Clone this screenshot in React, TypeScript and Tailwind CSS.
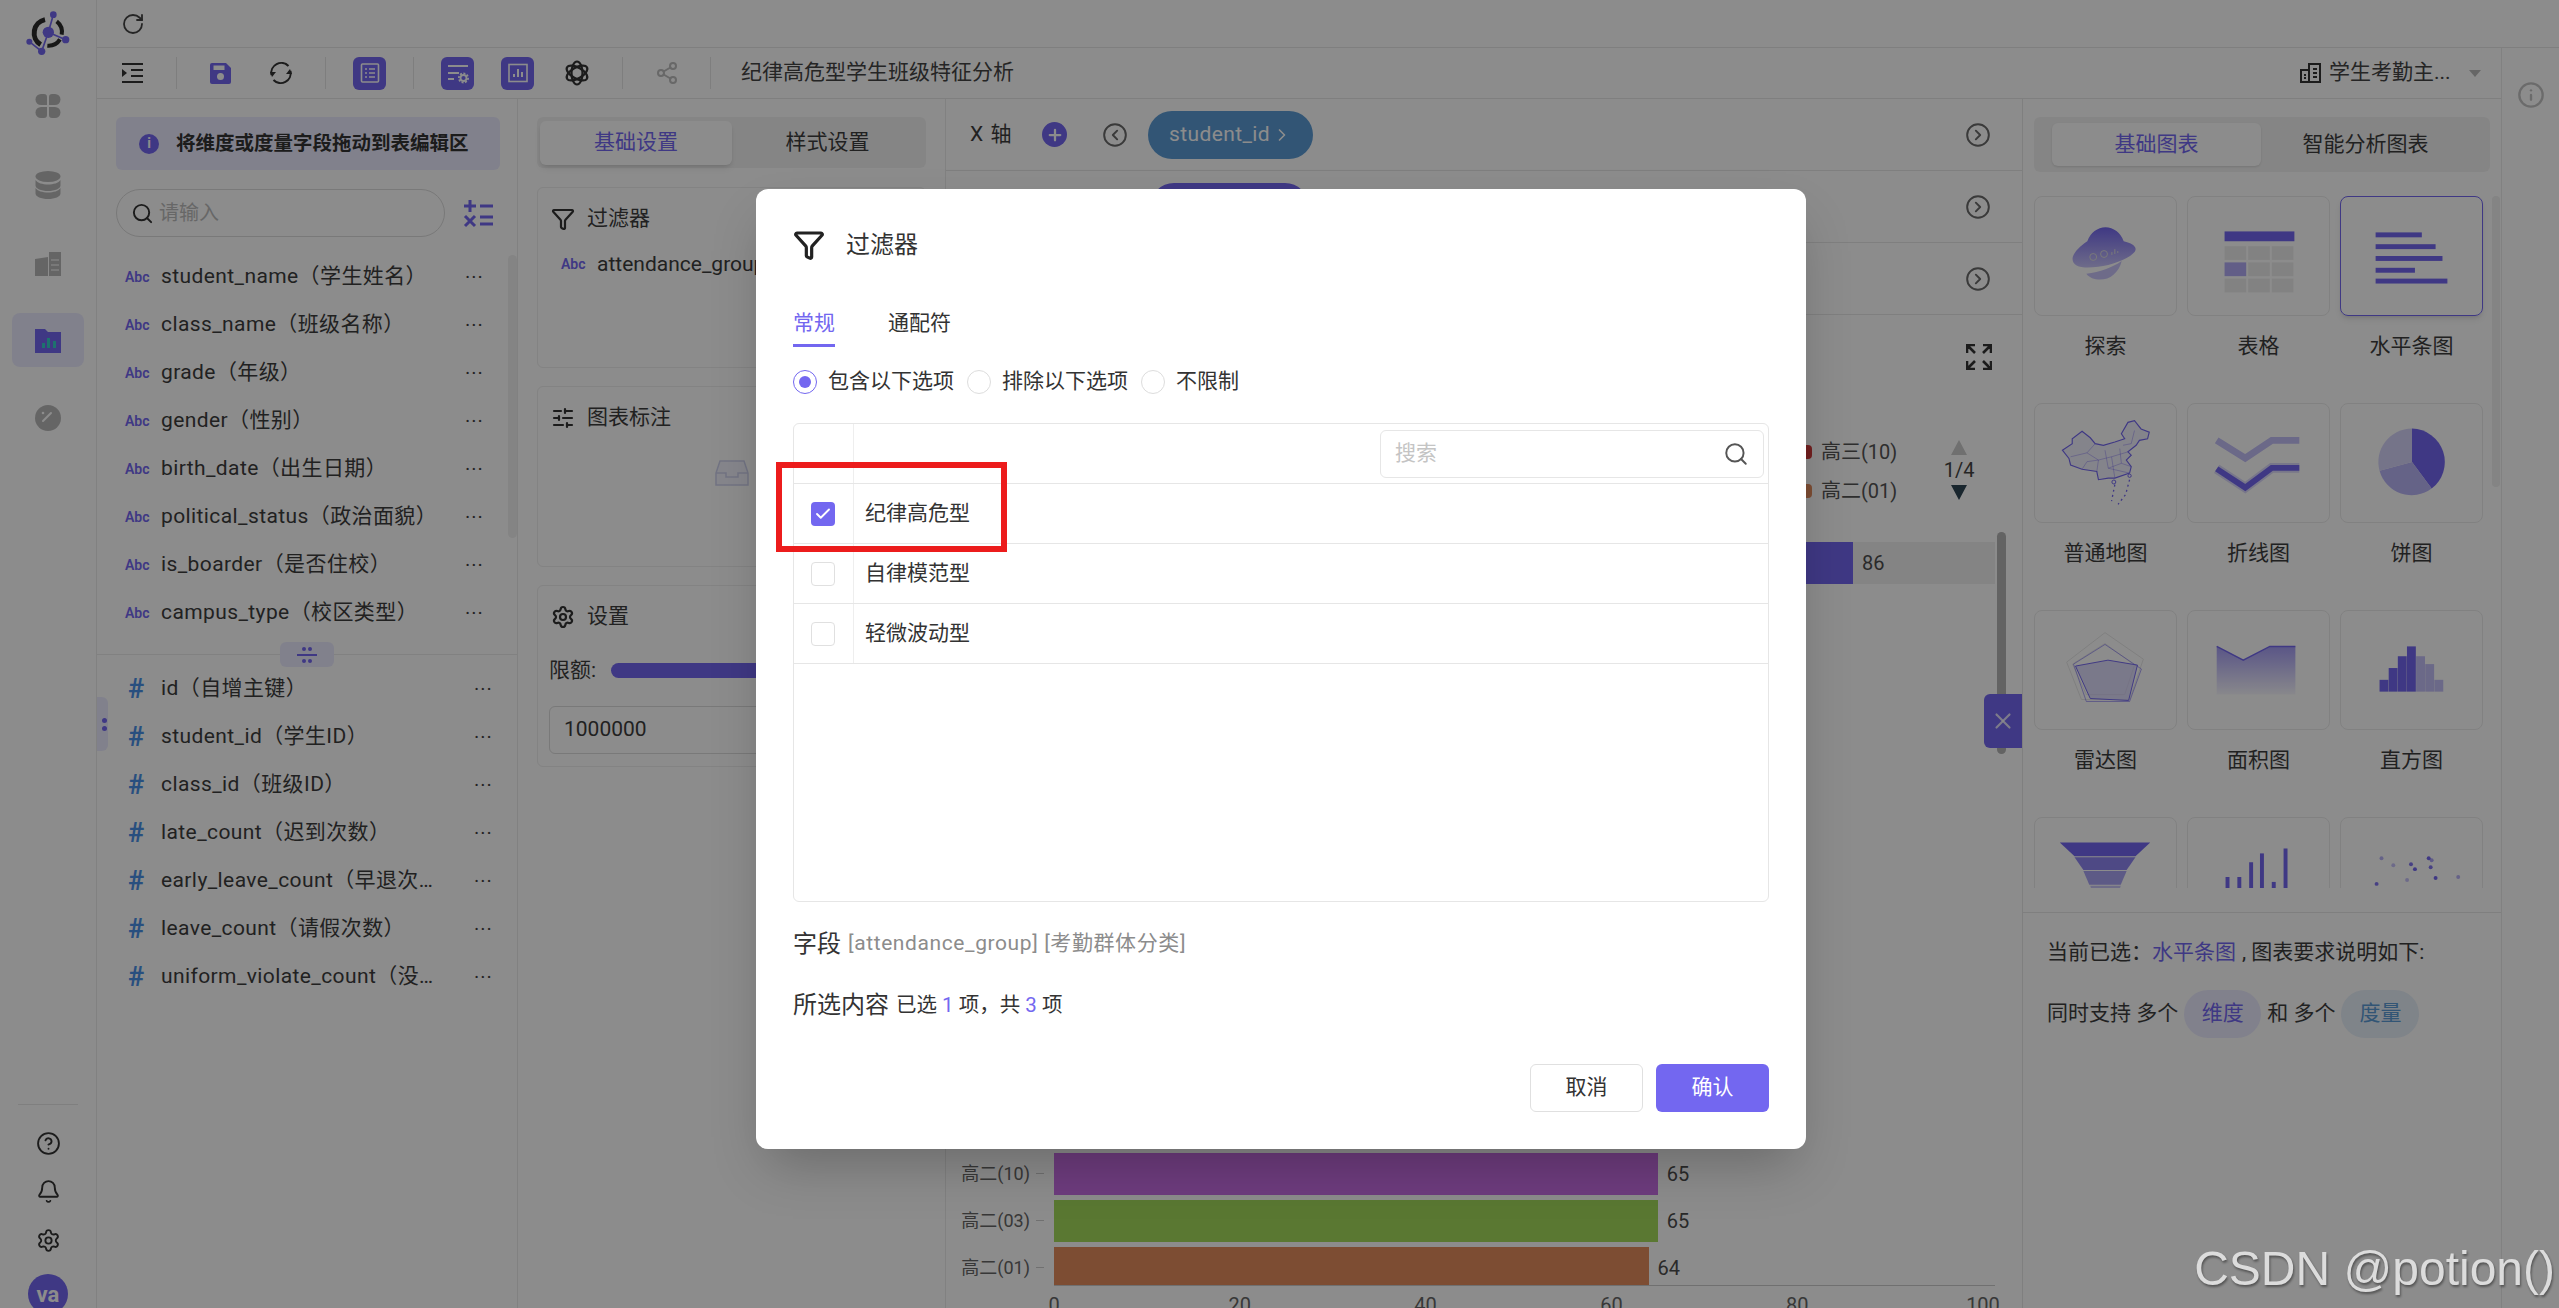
import { Bell, ChevronRight, CircleChevronLeft, CircleChevronRight, CircleHelp, Info, Funnel, Plus, RotateCw, Search, Settings, Share2, SlidersHorizontal, X, Check } from 'lucide-react';

const dims = [
  'student_name（学生姓名）',
  'class_name（班级名称）',
  'grade（年级）',
  'gender（性别）',
  'birth_date（出生日期）',
  'political_status（政治面貌）',
  'is_boarder（是否住校）',
  'campus_type（校区类型）',
];

const measures = [
  'id（自增主键）',
  'student_id（学生ID）',
  'class_id（班级ID）',
  'late_count（迟到次数）',
  'early_leave_count（早退次数）',
  'leave_count（请假次数）',
  'uniform_violate_count（没穿校服次数）',
];

// 图表的条形数据
const bars = [
  { label: '高三(02)', value: 86, color: '#7367f0' },
  { label: '高三(05)', value: 76, color: '#5b9bd5' },
  { label: '高三(07)', value: 75, color: '#7367f0' },
  { label: '高一(04)', value: 74, color: '#5b9bd5' },
  { label: '高一(06)', value: 73, color: '#7367f0' },
  { label: '高一(09)', value: 72, color: '#5b9bd5' },
  { label: '高二(02)', value: 71, color: '#7367f0' },
  { label: '高二(05)', value: 70, color: '#5b9bd5' },
  { label: '高二(07)', value: 69, color: '#7367f0' },
  { label: '高二(08)', value: 68, color: '#5b9bd5' },
  { label: '高一(01)', value: 68, color: '#7367f0' },
  { label: '高一(03)', value: 67, color: '#5b9bd5' },
  { label: '高三(10)', value: 66, color: '#d0393a' },
  { label: '高二(10)', value: 65, color: '#c96ee6' },
  { label: '高二(03)', value: 65, color: '#a5db5c' },
  { label: '高二(01)', value: 64, color: '#e48c5e' },
];

function Logo() {
  return (
    <svg className="ml-[4px]" width="80" height="60" viewBox="0 0 240 180" fill="none">
      <path d="M92 122 A41 41 0 0 1 105 47" stroke="#2a2a2a" strokeWidth="15" />
      <path d="M140 52 A41 41 0 0 1 155 92" stroke="#2a2a2a" strokeWidth="12" />
      <path d="M112 125 A41 41 0 0 0 150 106" stroke="#2a2a2a" strokeWidth="12" />
      <path d="M130 32 L115 85 L167 107 M115 85 L95 142 L58 113" stroke="#7367f0" strokeWidth="5" />
      <circle cx="115" cy="85" r="17" fill="#7367f0" />
      <circle cx="130" cy="32" r="10" fill="#7367f0" />
      <circle cx="167" cy="107" r="11" fill="#7367f0" />
      <circle cx="95" cy="142" r="11" fill="#7367f0" />
      <circle cx="58" cy="113" r="9" fill="#7367f0" />
    </svg>
  );
}

function RailIcons() {
  return (
    <>
      <div className="h-[72px] flex items-center justify-center mt-[2px]">
        <svg width="26" height="26" viewBox="0 0 26 26" fill="#b9b9b9">
          <path d="M6 1h3a3 3 0 0 1 3 3v8H6a5.500 5.500 0 0 1 0-11z" />
          <path d="M20 1h-3a3 3 0 0 0-3 3v8h6a5.500 5.500 0 0 0 0-11z" />
          <path d="M6 25h3a3 3 0 0 0 3-3v-8H6a5.500 5.500 0 0 0 0 11z" />
          <path d="M20 25h-3a3 3 0 0 1-3-3v-8h6a5.500 5.500 0 0 1 0 11z" />
        </svg>
      </div>
      <div className="h-[80px] flex items-center justify-center mt-[3px]">
        <svg width="26" height="28" viewBox="0 0 26 28" fill="#b9b9b9">
          <ellipse cx="13" cy="5.500" rx="12.500" ry="5.500" />
          <path d="M.5 9c2 3 7 4.500 12.500 4.500S23.500 12 25.500 9v5.500c0 3-5.500 5.500-12.500 5.500S.5 17.500.5 14.500z" />
          <path d="M.5 17c2 3 7 4.500 12.500 4.500s10.500-1.500 12.500-4.500v5.500c0 3-5.500 5.500-12.500 5.500S.5 25.500.5 22.500z" />
        </svg>
      </div>
      <div className="h-[76px] flex items-center justify-center">
        <svg width="26" height="26" viewBox="0 0 26 26" fill="#b9b9b9">
          <path d="M0 9l13-2v19H0z" />
          <path d="M14 2h12v24H14z" />
          <path d="M16 9h8v2h-8zM16 14h8v2h-8zM16 19h8v2h-8z" fill="#dcdcdc" />
        </svg>
      </div>
      <div className="mt-[12px] mx-[12px] h-[54px] rounded-lg bg-[#ececff] flex items-center justify-center">
        <svg width="26" height="25" viewBox="0 0 26 25" fill="#7367f0">
          <path d="M0 1h10l3 3h13v21H0z" />
          <rect x="7" y="15" width="3" height="5" fill="#36cfc9" />
          <rect x="12" y="10" width="3" height="10" fill="#36cfc9" />
          <rect x="18" y="13" width="3" height="7" fill="#36cfc9" />
        </svg>
      </div>
      <div className="mt-[24px] h-[54px] flex items-center justify-center">
        <svg width="26" height="26" viewBox="0 0 26 26">
          <circle cx="13" cy="13" r="13" fill="#b9b9b9" />
          <path d="M8 16l8-8" stroke="#fff" strokeWidth="2" strokeLinecap="round" />
          <circle cx="8" cy="8" r="1.300" fill="#fff" />
        </svg>
      </div>
    </>
  );
}

function PurpleBtn({ children }: { children: React.ReactNode }) {
  return <div className="w-[33px] h-[33px] rounded-md bg-[#7367f0] flex items-center justify-center">{children}</div>;
}

function Sep({ left }: { left: string }) {
  return <div className={`w-px h-[32px] bg-[#e6e6e6] ${left}`} />;
}

function Toolbar() {
  return (
    <div className="h-[51px] shrink-0 flex items-center border-b border-[#e8e8e8] pl-[25px]">
      <svg width="21" height="20" viewBox="0 0 21 20" fill="#333" stroke="none">
        <rect x="0" y="0" width="21" height="2" />
        <rect x="0" y="18" width="21" height="2" />
        <rect x="9" y="6" width="12" height="2" />
        <rect x="9" y="12" width="12" height="2" />
        <path d="M0 6l5 4-5 4z" />
      </svg>
      <Sep left="ml-[33px]" />
      <svg className="ml-[33px]" width="21" height="21" viewBox="0 0 21 21" fill="#7367f0">
        <path d="M0 2a2 2 0 0 1 2-2h14l5 5v14a2 2 0 0 1-2 2H2a2 2 0 0 1-2-2z" />
        <rect x="3.500" y="2.500" width="11" height="4.500" fill="#fff" />
        <circle cx="10.500" cy="13.500" r="3.500" fill="#fff" />
      </svg>
      <svg className="ml-[38px]" width="24" height="24" viewBox="0 0 24 24" fill="none" stroke="#333" strokeWidth="2">
        <path d="M2.500 14A10 10 0 0 1 19.500 5" />
        <path d="M21.500 10A10 10 0 0 1 4.500 19" />
        <path d="M18 11l4-5 2 5z" fill="#333" stroke="none" transform="translate(-1 2)" />
        <path d="M6 13l-4 5-2-5z" fill="#333" stroke="none" transform="translate(1 -2)" />
      </svg>
      <Sep left="ml-[32px]" />
      <div className="ml-[27px]">
        <PurpleBtn>
          <svg width="24" height="24" viewBox="0 0 24 24" fill="none" stroke="#fff" strokeWidth="1.600">
            <rect x="3.500" y="3" width="17" height="18" rx="1" />
            <path d="M7 8h2M11 8h6M7 12h2M11 12h6M7 16h2M11 16h6" />
          </svg>
        </PurpleBtn>
      </div>
      <Sep left="ml-[27px]" />
      <div className="ml-[27px]">
        <PurpleBtn>
          <svg width="26" height="26" viewBox="0 0 26 26" fill="none" stroke="#fff" strokeWidth="1.800">
            <path d="M3 6h20M3 13h11M3 19h6" />
            <circle cx="18.500" cy="18" r="3" />
            <circle cx="18.500" cy="18" r="4.600" strokeDasharray="2 1.500" />
          </svg>
        </PurpleBtn>
      </div>
      <div className="ml-[27px]">
        <PurpleBtn>
          <svg width="24" height="24" viewBox="0 0 24 24" fill="none" stroke="#fff" strokeWidth="1.600">
            <rect x="3" y="3.500" width="18" height="17" />
            <path d="M8 16v-3M12 16V8M16 16v-5" strokeWidth="2" />
          </svg>
        </PurpleBtn>
      </div>
      <svg className="ml-[30px]" width="26" height="26" viewBox="0 0 26 26" fill="none" stroke="#333" strokeWidth="2.200">
        <ellipse cx="13" cy="13" rx="11.500" ry="5.500" transform="rotate(90 13 13)" />
        <ellipse cx="13" cy="13" rx="11.500" ry="5.500" transform="rotate(30 13 13)" />
        <ellipse cx="13" cy="13" rx="11.500" ry="5.500" transform="rotate(150 13 13)" />
      </svg>
      <Sep left="ml-[32px]" />
      <Share2 size={24} className="ml-[32px] text-[#bdbdbd]" />
      <Sep left="ml-[31px]" />
      <div className="ml-[30px] text-[21px] text-[#444] whitespace-nowrap">纪律高危型学生班级特征分析</div>
      <div className="ml-auto mr-[20px] flex items-center">
        <svg width="21" height="20" viewBox="0 0 21 20" fill="none" stroke="#333" strokeWidth="2">
          <path d="M1 19V7h8V1h11v18zM9 7v12M4 12h2M4 15h2M13 6h4M13 10h4M13 14h4" />
        </svg>
        <span className="ml-[8px] w-[123px] text-[21px] text-[#444] whitespace-nowrap">学生考勤主...</span>
        <span className="ml-[17px] w-0 h-0 border-x-[6px] border-x-transparent border-t-[7px] border-t-[#bbb]" />
      </div>
    </div>
  );
}

function FieldPanel() {
  return (
    <div className="relative w-[421px] shrink-0 border-r border-[#ececec]">
      <div className="h-[555px] px-[19px] pt-[18px] relative">
        <div className="h-[53px] rounded-md bg-[#ececff] flex items-center pl-[23px] w-[384px]">
          <span className="w-[20px] h-[20px] rounded-full bg-[#7367f0] text-white text-[14px] font-bold flex items-center justify-center">i</span>
          <span className="ml-[17px] text-[19.500px] font-bold text-[#333] whitespace-nowrap">将维度或度量字段拖动到表编辑区</span>
        </div>
        <div className="mt-[19px] flex items-center">
          <div className="w-[329px] h-[48px] rounded-full border border-[#dcdcdc] flex items-center pl-[14px]">
            <Search size={23} className="text-[#333]" />
            <span className="ml-[5px] text-[20px] text-[#bcbcbc]">请输入</span>
          </div>
          <svg className="ml-[18px]" width="30" height="30" viewBox="0 0 30 30" stroke="#7367f0" strokeWidth="3" fill="none">
            <path d="M1 8h12M7 2v12M17 8h13M2 18l10 10M12 18L2 28M17 19h13M17 26h13" />
          </svg>
        </div>
        <div className="mt-[16px]">
          {dims.map((d) => (
            <div key={d} className="h-[48px] flex items-center">
              <span className="ml-[9px] w-[36px] text-[14px] font-semibold text-[#7367f0]">Abc</span>
              <span className="w-[282px] truncate text-[21px] tracking-[0.4px] text-[#3d3d3d]">{d}</span>
              <span className="ml-[22px] w-[20px] text-[#3d3d3d] text-[20px] tracking-[1px] leading-none">···</span>
            </div>
          ))}
        </div>
        <div className="absolute right-0 top-[156px] w-[9px] h-[283px] rounded-full bg-[#f1f1f1]" />
      </div>
      <div className="relative border-t border-[#ececec]">
        <div className="absolute left-[183px] -top-[13px] w-[54px] h-[25px] rounded-md bg-[#ececff] flex items-center justify-center">
          <svg width="22" height="18" viewBox="0 0 22 18" fill="#7367f0">
            <circle cx="8" cy="3" r="2" />
            <circle cx="14" cy="3" r="2" />
            <rect x="1" y="8" width="20" height="2" />
            <circle cx="8" cy="15" r="2" />
            <circle cx="14" cy="15" r="2" />
          </svg>
        </div>
        <div className="pt-[10px]">
          {measures.map((m) => (
            <div key={m} className="h-[48px] flex items-center">
              <span className="ml-[31px] w-[33px] text-[27px] font-semibold text-[#4a90e8] leading-none">#</span>
              <span className="w-[284px] truncate text-[21px] tracking-[0.4px] text-[#3d3d3d]">{m}</span>
              <span className="ml-[29px] w-[20px] text-[#3d3d3d] text-[20px] tracking-[1px] leading-none">···</span>
            </div>
          ))}
        </div>
      </div>
      <div className="absolute left-0 top-[598px] w-[11px] h-[54px] rounded-r-md bg-[#ececff] flex flex-col items-end justify-center gap-[3px] pr-[1px]">
        <span className="w-[5px] h-[5px] rounded-full bg-[#7367f0]" />
        <span className="w-[5px] h-[5px] rounded-full bg-[#7367f0]" />
      </div>
    </div>
  );
}

function Card({ icon, title, className, children }: { icon: React.ReactNode; title: string; className: string; children?: React.ReactNode }) {
  return (
    <div className={`rounded-md border border-[#eeeeee] px-[13px] ${className}`}>
      <div className="h-[62px] flex items-center">
        <div className="w-[24px] flex justify-center">{icon}</div>
        <span className="ml-[12px] text-[21px] text-[#3d3d3d]">{title}</span>
      </div>
      {children}
    </div>
  );
}

function SettingPanel() {
  return (
    <div className="w-[428px] shrink-0 border-r border-[#ececec] px-[19px] pt-[18px]">
      <div className="h-[51px] rounded-md bg-[#f3f3f3] flex items-center p-[3px]">
        <div className="w-[192px] h-[44px] rounded-md bg-white shadow-md flex items-center justify-center text-[21px] text-[#7367f0]">基础设置</div>
        <div className="flex-1 text-center text-[21px] text-[#3d3d3d]">样式设置</div>
      </div>
      <Card className="mt-[19px] h-[181px]" title="过滤器" icon={<Funnel size={24} strokeWidth={2.2} className="text-[#333]" />}>
        <div className="flex items-center pl-[10px] -mt-[1px]">
          <span className="w-[36px] text-[14px] font-semibold text-[#7367f0]">Abc</span>
          <span className="text-[21px] text-[#3d3d3d] whitespace-nowrap">attendance_group</span>
        </div>
      </Card>
      <Card className="mt-[18px] h-[181px]" title="图表标注" icon={<SlidersHorizontal size={24} strokeWidth={2.2} className="text-[#333]" />}>
        <div className="flex justify-center mt-[8px]">
          <svg width="36" height="30" viewBox="0 0 36 30" fill="#f4f5ff" stroke="#cfd2ee" strokeWidth="1.500">
            <path d="M6 4h24l4 12v12H2V16z" />
            <path d="M2 16h10v4h12v-4h10" />
          </svg>
        </div>
      </Card>
      <Card className="mt-[18px] h-[182px]" title="设置" icon={<Settings size={24} strokeWidth={2.2} className="text-[#333]" />}>
        <div className="flex items-center -ml-[2px] mt-[8px] h-[29px]">
          <span className="text-[21px] text-[#3d3d3d] w-[62px]">限额:</span>
          <div className="flex-1 h-[15px] rounded-full bg-[#7367f0]" />
        </div>
        <div className="mt-[21px] -ml-[2px] h-[48px] rounded-md border border-[#dddddd] flex items-center pl-[14px] text-[21px] text-[#3d3d3d]">1000000</div>
      </Card>
    </div>
  );
}

function AxisRow({ children }: { children?: React.ReactNode }) {
  return (
    <div className="h-[72px] shrink-0 border-b border-[#e8e8e8] flex items-center pl-[24px] pr-[31px]">
      {children}
      <CircleChevronRight size={26} strokeWidth={1.800} className="ml-auto text-[#6a6a6a]" />
    </div>
  );
}

function ChartPanel() {
  return (
    <div className="relative w-[1076px] shrink-0 flex flex-col overflow-hidden">
      <AxisRow>
        <span className="text-[21px] text-[#3d3d3d] w-[60px] tracking-[1px]">X 轴</span>
        <span className="ml-[12px] w-[25px] h-[25px] rounded-full bg-[#7367f0] flex items-center justify-center">
          <Plus size={18} strokeWidth={3} className="text-white" />
        </span>
        <CircleChevronLeft size={26} strokeWidth={1.800} className="ml-[35px] text-[#6a6a6a]" />
        <span className="ml-[20px] w-[165px] h-[48px] rounded-full bg-[#5b9bd5] text-white flex items-center justify-center text-[21px] tracking-[0.4px]">
          student_id
          <ChevronRight size={20} className="text-white ml-[2px]" />
        </span>
      </AxisRow>
      <AxisRow>
        <span className="ml-[180px] w-[159px] h-[48px] rounded-full bg-[#7367f0]" />
      </AxisRow>
      <AxisRow />
      <div className="relative flex-1">
        <svg className="absolute right-[30px] top-[29px]" width="26" height="26" viewBox="0 0 26 26" fill="none" stroke="#333" strokeWidth="2.600">
          <path d="M1 9V1h8M1 1l8 8M17 1h8v8M25 1l-8 8M1 17v8h8M1 25l8-8M25 17v8h-8M25 25l-8-8" />
        </svg>
        <div className="absolute left-[854px] top-[129px] flex flex-col gap-[23px]">
          {[
            { c: '#d0393a', t: '高三(10)' },
            { c: '#e48c5e', t: '高二(01)' },
          ].map((l) => (
            <div key={l.t} className="flex items-center h-[16px]">
              <span className="w-[12px] h-[14px] rounded-sm" style={{ background: l.c }} />
              <span className="ml-[9px] text-[20px] text-[#555] whitespace-nowrap">{l.t}</span>
            </div>
          ))}
        </div>
        <div className="absolute left-[998px] top-[125px] flex flex-col items-center w-[30px]">
          <span className="w-0 h-0 border-x-[8px] border-x-transparent border-b-[15px] border-b-[#cccccc]" />
          <span className="text-[20px] leading-[30px] text-[#444]">1/4</span>
          <span className="w-0 h-0 border-x-[8px] border-x-transparent border-t-[15px] border-t-[#2f4554]" />
        </div>
        <div className="pt-[224px] h-[970px] overflow-hidden">
          {bars.map((b, i) => (
            <div key={b.label} className="h-[47px] flex items-center">
              <span className="w-[90px] text-right pr-[6px] text-[18px] text-[#666] shrink-0">{b.label}</span>
              <span className="w-[8px] h-px bg-[#cccccc] mr-[10px] shrink-0" />
              <div className={`w-[941px] h-[42px] flex items-center ${i === 0 ? 'bg-[#0000000f]' : ''}`}>
                <div className="h-full" style={{ width: b.value * 9.29, background: b.color }} />
                <span className="ml-[9px] text-[20px] text-[#4d4d4d]">{b.value}</span>
              </div>
            </div>
          ))}
        </div>
        <div className="absolute left-[108px] right-[27px] top-[970px] h-px bg-[#cccccc]" />
        <div className="absolute left-[108px] top-[975px] w-[929px] flex justify-between text-[20px] text-[#666]">
          <span className="w-0 flex justify-center">0</span>
          <span className="w-0 flex justify-center">20</span>
          <span className="w-0 flex justify-center">40</span>
          <span className="w-0 flex justify-center">60</span>
          <span className="w-0 flex justify-center">80</span>
          <span className="w-0 flex justify-center">100</span>
        </div>
        <div className="absolute left-[1051px] top-[217px] w-[9px] h-[222px] rounded-full bg-[#b4b4b4]" />
        <div className="absolute left-[1038px] top-[379px] w-[38px] h-[54px] rounded-l-md bg-[#7367f0] flex items-center justify-center">
          <X size={26} strokeWidth={2} className="text-white/80" />
        </div>
      </div>
    </div>
  );
}

const purple = '#7367f0';

function PlanetIcon() {
  return (
    <svg viewBox="0 0 143 120" className="w-full h-full">
      <defs>
        <linearGradient id="planet" x1="0" y1="0" x2="0" y2="1">
          <stop offset="0" stopColor={purple} />
          <stop offset="1" stopColor="#c9c4fa" />
        </linearGradient>
      </defs>
      <path d="M53 45a20 23 0 0 1 37 0c8 2 13 5 12 9-1 6-21 15-38 17-16 2-26 0-26-8 0-5 6-12 15-18z" fill="url(#planet)" />
      <path d="M52 78c14-2 26-6 36-13-3 12-12 19-22 19-6 0-11-2-14-6z" fill="#c9c4fa" />
      <circle cx="59" cy="61" r="3.500" fill="none" stroke="#ddd" />
      <circle cx="70" cy="58" r="3.500" fill="none" stroke="#ddd" />
      <path d="M78 59v-3M81 58v-5M84 57v-2" stroke="#ddd" />
    </svg>
  );
}

function TableIcon() {
  const cells = [];
  for (let r = 0; r < 3; r++) {
    for (let c = 0; c < 3; c++) {
      cells.push(<rect key={`${r}${c}`} x={37 + c * 24} y={50 + r * 16.500} width={22} height={14} fill={r === 1 && c === 0 ? '#b3acf6' : '#ededed'} />);
    }
  }
  return (
    <svg viewBox="0 0 143 120" className="w-full h-full">
      <rect x="37" y="35" width="71" height="10" fill={purple} />
      {cells}
    </svg>
  );
}

function HBarIcon() {
  return (
    <svg viewBox="0 0 143 120" className="w-full h-full" fill={purple}>
      <rect x="35" y="36" width="47" height="5" />
      <rect x="35" y="48" width="61" height="5" />
      <rect x="35" y="60" width="68" height="5" />
      <rect x="35" y="72" width="40" height="5" />
      <rect x="35" y="83" width="73" height="5" />
    </svg>
  );
}

function MapIcon() {
  return (
    <svg viewBox="0 0 143 120" className="w-full h-full" fill="none" stroke={purple}>
      <g transform="translate(6 7) scale(0.3333)">
        <path d="M65 120L95 100L95 85L125 62L150 82L165 100L190 105L225 95L255 85L245 70L265 35L285 30L305 55L330 65L325 85L300 90L290 105L265 125L275 135L260 150L275 170L270 190L225 205L205 205L175 210L170 185L125 178L90 165L85 145z" fill="#f1f0fe" strokeWidth="3.500" />
        <path d="M90 140L140 128L165 100M140 128L175 150L170 185M175 150L215 140L265 125M215 140L225 205M195 120L205 175L270 190M240 115L245 160L205 175M175 150L140 155L125 178M285 60L275 100L250 105M245 160L275 170" strokeWidth="1.800" strokeOpacity="0.650" />
        <path d="M225 225L215 275M270 210L258 255L235 285" strokeWidth="4" strokeDasharray="6 10" />
        <circle cx="222" cy="217" r="6" strokeWidth="3" />
        <circle cx="270" cy="198" r="5" strokeWidth="3" />
      </g>
    </svg>
  );
}

function LineIcon() {
  return (
    <svg viewBox="0 0 143 120" className="w-full h-full" fill="none" strokeWidth="6">
      <path d="M29 37l29 18 27-18h28" stroke="#c3bff8" strokeWidth="7" />
      <path d="M29 66l29 19 27-20h28" stroke="#dbd9fb" strokeWidth="10" />
      <path d="M29 66l29 19 27-20h28" stroke={purple} />
    </svg>
  );
}

function PieIcon() {
  return (
    <svg viewBox="0 0 143 120" className="w-full h-full">
      <path d="M72 59V25A34 34 0 0 1 92 86z" fill={purple} />
      <path d="M72 59L92 86A34 34 0 0 1 39 68z" fill="#b9b4f6" />
      <path d="M72 59L39 68A34 34 0 0 1 72 25z" fill="#d6d3fa" />
    </svg>
  );
}

function RadarIcon() {
  return (
    <svg viewBox="0 0 143 120" className="w-full h-full" fill="none">
      <path d="M71 22l39 27-14 41H47L32 52z" stroke="#e8e8e8" />
      <path d="M71 33l30 22-10 30H52L38 54z" stroke="#e8e8e8" />
      <path d="M71 34l37 25-12 33H52L39 54z" stroke={purple} strokeWidth="0.600" />
      <path d="M41 56l33-6 30 5-9 36-39-2z" stroke={purple} fill="#c9c5f8" fillOpacity="0.600" />
    </svg>
  );
}

function AreaIcon() {
  return (
    <svg viewBox="0 0 143 120" className="w-full h-full">
      <defs>
        <linearGradient id="area" x1="0" y1="0" x2="0" y2="1">
          <stop offset="0" stopColor={purple} stopOpacity="0.650" />
          <stop offset="1" stopColor={purple} stopOpacity="0.050" />
        </linearGradient>
      </defs>
      <path d="M29 36l27 14 27-14h26v49H29z" fill="url(#area)" />
      <path d="M29 36l27 14 27-14h26" fill="none" stroke={purple} strokeWidth="1.500" />
    </svg>
  );
}

function HistIcon() {
  const vals = [12, 24, 36, 46, 36, 28, 12];
  return (
    <svg viewBox="0 0 143 120" className="w-full h-full">
      {vals.map((v, i) => (
        <rect key={i} x={39 + i * 9.300} y={82 - v} width={9} height={v} fill={i < 4 ? purple : '#c3bff8'} />
      ))}
    </svg>
  );
}

function FunnelIcon() {
  return (
    <svg viewBox="0 0 143 120" className="w-full h-full">
      <path d="M25 25h92l-15 14H40z" fill={purple} />
      <path d="M40 40h62l-9 13H49z" fill="#8f86f2" />
      <path d="M49 54h44l-6 14H55z" fill="#aaa5f5" />
      <path d="M56 69h31l-3 10H59z" fill="#c9c5f8" />
    </svg>
  );
}

function ColIcon() {
  return (
    <svg viewBox="0 0 143 120" className="w-full h-full" fill={purple}>
      <rect x="38" y="60" width="4" height="30" />
      <rect x="50" y="60" width="4" height="30" />
      <rect x="62" y="45" width="4" height="45" />
      <rect x="73" y="36" width="4" height="54" />
      <rect x="85" y="65" width="4" height="25" />
      <rect x="97" y="31" width="4" height="59" />
    </svg>
  );
}

function ScatterIcon() {
  const pts = [
    [41, 41, 0.5], [53, 48, 0.4], [71, 47, 0.9], [75, 52, 1], [89, 41, 1], [92, 43, 0.6], [91, 50, 0.9],
    [96, 61, 1], [119, 60, 0.5], [36, 67, 0.9], [67, 63, 0.4],
  ];
  return (
    <svg viewBox="0 0 143 120" className="w-full h-full" fill={purple}>
      {pts.map(([x, y, o], i) => (
        <circle key={i} cx={x} cy={y} r="2" fillOpacity={o} />
      ))}
    </svg>
  );
}

const chartTypes = [
  { name: '探索', icon: <PlanetIcon /> },
  { name: '表格', icon: <TableIcon /> },
  { name: '水平条图', icon: <HBarIcon />, active: true },
  { name: '普通地图', icon: <MapIcon /> },
  { name: '折线图', icon: <LineIcon /> },
  { name: '饼图', icon: <PieIcon /> },
  { name: '雷达图', icon: <RadarIcon /> },
  { name: '面积图', icon: <AreaIcon /> },
  { name: '直方图', icon: <HistIcon /> },
  { name: '漏斗图', icon: <FunnelIcon /> },
  { name: '柱状图', icon: <ColIcon /> },
  { name: '散点图', icon: <ScatterIcon /> },
];

function RightPanel() {
  return (
    <div className="relative w-[479px] shrink-0 border-l border-[#e8e8e8]">
      <div className="mx-[11px] mt-[18px] h-[55px] rounded-md bg-[#f3f3f3] flex items-center pl-[18px]">
        <div className="w-[209px] h-[43px] rounded-md bg-white shadow flex items-center justify-center text-[21px] text-[#7367f0]">基础图表</div>
        <div className="w-[209px] text-center text-[21px] text-[#3d3d3d]">智能分析图表</div>
      </div>
      <div className="mt-[24px] ml-[11px] h-[692px] overflow-hidden">
        <div className="grid grid-cols-[143px_143px_143px] gap-x-[10px]">
          {chartTypes.map((c) => (
            <div key={c.name} className="h-[207px]">
              <div className={`h-[120px] rounded-lg border overflow-hidden ${c.active ? 'border-[#7367f0] shadow-md' : 'border-[#ececec]'}`}>{c.icon}</div>
              <div className="mt-[17px] h-[28px] flex items-center justify-center text-[21px] text-[#3d3d3d]">{c.name}</div>
            </div>
          ))}
        </div>
      </div>
      <div className="absolute right-[1px] top-[97px] w-[8px] h-[291px] rounded-full bg-[#f0f0f0]" />
      <div className="mt-[24px] border-t border-[#e8e8e8] pl-[24px] pt-[24px] text-[21px] text-[#3d3d3d]">
        <div className="h-[32px] flex items-center whitespace-nowrap">
          当前已选：<span className="text-[#7367f0]">水平条图</span>
          <span className="ml-[6px]">, 图表要求说明如下:</span>
        </div>
        <div className="mt-[21px] h-[48px] flex items-center whitespace-nowrap">
          同时支持 多个
          <span className="ml-[6px] w-[77px] h-[48px] rounded-full bg-[#ececff] text-[#7367f0] flex items-center justify-center">维度</span>
          <span className="ml-[6px]">和 多个</span>
          <span className="ml-[6px] w-[78px] h-[48px] rounded-full bg-[#e8f0fa] text-[#5b9bd5] flex items-center justify-center">度量</span>
        </div>
      </div>
    </div>
  );
}

function Modal() {
  const rows = ['纪律高危型', '自律模范型', '轻微波动型'];
  return (
    <div className="relative w-[1050px] h-[960px] rounded-xl bg-white shadow-2xl px-[37px] pt-[43px] text-[#333]">
      <div className="h-[26px] flex items-center">
        <Funnel size={32} strokeWidth={2.4} className="text-[#222]" />
        <span className="ml-[21px] text-[24px]">过滤器</span>
      </div>
      <div className="mt-[50px] h-[39px] flex text-[21px]">
        <div className="w-[42px] h-[39px] border-b-[3px] border-[#7367f0] text-[#7367f0] whitespace-nowrap">常规</div>
        <div className="ml-[53px]">通配符</div>
      </div>
      <div className="mt-[23px] h-[24px] flex items-center text-[21px]">
        <span className="w-[24px] h-[24px] rounded-full border border-[#7367f0] flex items-center justify-center">
          <span className="w-[12px] h-[12px] rounded-full bg-[#7367f0]" />
        </span>
        <span className="ml-[11px] w-[127px] whitespace-nowrap">包含以下选项</span>
        <span className="ml-[12px] w-[24px] h-[24px] rounded-full border border-[#dddddd]" />
        <span className="ml-[11px] w-[127px] whitespace-nowrap">排除以下选项</span>
        <span className="ml-[12px] w-[24px] h-[24px] rounded-full border border-[#dddddd]" />
        <span className="ml-[11px] whitespace-nowrap">不限制</span>
      </div>
      <div className="mt-[29px] h-[479px] rounded-md border border-[#e6e6e6]">
        <div className="h-[60px] flex border-b border-[#e6e6e6]">
          <div className="w-[60px] border-r border-[#eeeeee]" />
          <div className="flex-1 flex justify-end items-center pr-[4px]">
            <div className="w-[384px] h-[48px] rounded-md border border-[#e6e6e6] flex items-center justify-between pl-[14px] pr-[14px]">
              <span className="text-[21px] text-[#c4c4c4]">搜索</span>
              <Search size={26} strokeWidth={1.800} className="text-[#555]" />
            </div>
          </div>
        </div>
        {rows.map((r, i) => (
          <div key={r} className="h-[60px] flex border-b border-[#e6e6e6]">
            <div className="w-[60px] border-r border-[#eeeeee] flex items-center justify-center pr-[2px]">
              {i === 0 ? (
                <span className="w-[24px] h-[24px] rounded-[4px] bg-[#7367f0] flex items-center justify-center">
                  <Check size={18} strokeWidth={2.500} className="text-white" />
                </span>
              ) : (
                <span className="w-[24px] h-[24px] rounded-[4px] border border-[#e0e0e0]" />
              )}
            </div>
            <div className="flex-1 flex items-center pl-[11px] text-[21px]">{r}</div>
          </div>
        ))}
      </div>
      <div className="mt-[27px] h-[30px] flex items-center whitespace-nowrap">
        <span className="text-[24px]">字段</span>
        <span className="ml-[7px] text-[21px] tracking-[0.6px] text-[#8c8c8c]">[attendance_group] [考勤群体分类]</span>
      </div>
      <div className="mt-[31px] h-[30px] flex items-center whitespace-nowrap">
        <span className="text-[24px]">所选内容</span>
        <span className="ml-[7px] text-[20.500px]">
          已选 <span className="text-[#7367f0]">1</span> 项，共 <span className="text-[#7367f0]">3</span> 项
        </span>
      </div>
      <div className="mt-[44px] flex justify-end gap-[13px] text-[21px]">
        <div className="w-[113px] h-[48px] rounded-md border border-[#e0e0e0] flex items-center justify-center">取消</div>
        <div className="w-[113px] h-[48px] rounded-md bg-[#7367f0] text-white flex items-center justify-center">确认</div>
      </div>
      <div className="absolute left-[20px] top-[273px] w-[231px] h-[90px] border-[6px] border-[#ec1c1c]" />
    </div>
  );
}

export default function App() {
  return (
    <div className="relative w-[2559px] h-[1308px] overflow-hidden bg-white flex font-['Roboto','Noto_Sans_CJK_SC',sans-serif]">
      <div className="w-[97px] h-full shrink-0 border-r border-[#ececec] flex flex-col">
        <div className="h-[68px] flex items-center justify-center">
          <Logo />
        </div>
        <RailIcons />
        <div className="mt-auto mx-[18px] border-t border-[#e8e8e8] pt-[26px] flex flex-col items-center -mb-[6px]">
          <CircleHelp size={25} strokeWidth={1.800} className="text-[#333]" />
          <Bell size={25} strokeWidth={1.800} className="mt-[23px] text-[#333]" />
          <Settings size={25} strokeWidth={1.800} className="mt-[24px] text-[#333]" />
          <div className="mt-[21px] w-[40px] h-[40px] shrink-0 rounded-full bg-[#7367f0] text-white font-bold text-[22px] flex items-center justify-center">va</div>
        </div>
      </div>
      <div className="flex-1 flex flex-col min-w-0">
        <div className="h-[48px] shrink-0 border-b border-[#e8e8e8] flex items-center pl-[24px]">
          <RotateCw size={24} strokeWidth={1.800} className="text-[#444]" />
        </div>
        <div className="flex flex-1 min-h-0">
          <div className="w-[2404px] shrink-0 flex flex-col">
            <Toolbar />
            <div className="flex flex-1 min-h-0">
              <FieldPanel />
              <SettingPanel />
              <ChartPanel />
              <RightPanel />
            </div>
          </div>
          <div className="flex-1 border-l border-[#ececec] flex justify-center pt-[33px]">
            <Info size={28} strokeWidth={2} className="text-[#c4c4c4]" />
          </div>
        </div>
      </div>
      <div className="absolute inset-0 bg-black/45 flex justify-center pt-[189px] pl-[3px]">
        <Modal />
      </div>
      <div className="absolute right-[4px] bottom-[15px] text-[48px] leading-none text-[#dcdcdc] font-['Liberation_Sans',sans-serif] whitespace-nowrap drop-shadow-[1px_2px_1px_rgba(0,0,0,0.4)]">CSDN @potion()</div>
    </div>
  );
}
